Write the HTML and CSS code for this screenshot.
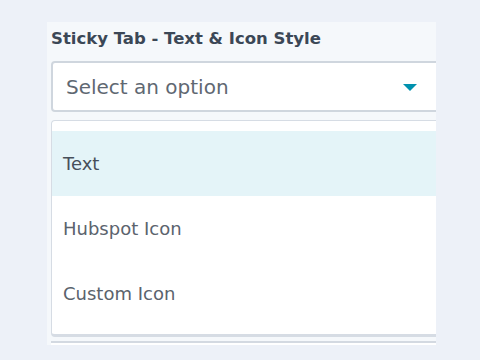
FILE: index.html
```html
<!DOCTYPE html>
<html lang="en">
<head>
    <meta charset="UTF-8">
    <title>Sticky Tab Style</title>
    <link rel="stylesheet" href="styles.css">
</head>
<body>
    <div class="panel">
        <label class="field-label">Sticky Tab - Text &amp; Icon Style</label>
        <div class="select">
            <span class="select-value">Select an option</span>
            <svg class="caret" width="14" height="8" viewBox="0 0 14 8">
                <path d="M0 0 H14 L7 7 Z" fill="#0091ae"/>
            </svg>
        </div>
        <ul class="menu">
            <li class="option active">Text</li>
            <li class="option">Hubspot Icon</li>
            <li class="option">Custom Icon</li>
        </ul>
        <div class="next-field"></div>
    </div>
</body>
</html>
```

FILE: styles.css
```css
* {
    margin: 0;
    padding: 0;
    box-sizing: border-box;
}

body {
    background: #edf1f8;
    font-family: 'DejaVu Sans', Lato, sans-serif;
    color: #33475b;
}

.panel {
    margin: 22px 0 0 47px;
    width: 389px;
    height: 323px;
    background: #f5f8fb;
    overflow: hidden;
    padding: 7px 0 0 4px;
}

.field-label {
    display: block;
    font-size: 16.5px;
    font-weight: 700;
    color: #3b4756;
    line-height: 20px;
}

.select {
    margin-top: 12px;
    width: 420px;
    height: 51px;
    background: #fff;
    border: 2px solid #cfd6de;
    border-radius: 4px;
    display: flex;
    align-items: center;
    padding: 0 0 0 13px;
}

.select-value {
    font-size: 20px;
    color: #5f6872;
    flex: 1;
}

.caret {
    margin-right: 52px;
    margin-top: 2px;
}

.menu {
    list-style: none;
    margin-top: 8px;
    width: 420px;
    height: 217px;
    background: #fff;
    border: 1px solid #d6dce4;
    border-bottom-width: 3px;
    border-radius: 4px;
    padding-top: 10px;
}

.option {
    height: 65px;
    display: flex;
    align-items: center;
    padding-left: 11px;
    font-size: 18px;
    color: #5b636d;
}

.option.active {
    background: #e4f4f8;
    color: #474f5a;
}

.next-field {
    margin-top: 4px;
    width: 420px;
    height: 6px;
    border-top: 2px solid #d3d9e1;
    background: #fff;
}
```
